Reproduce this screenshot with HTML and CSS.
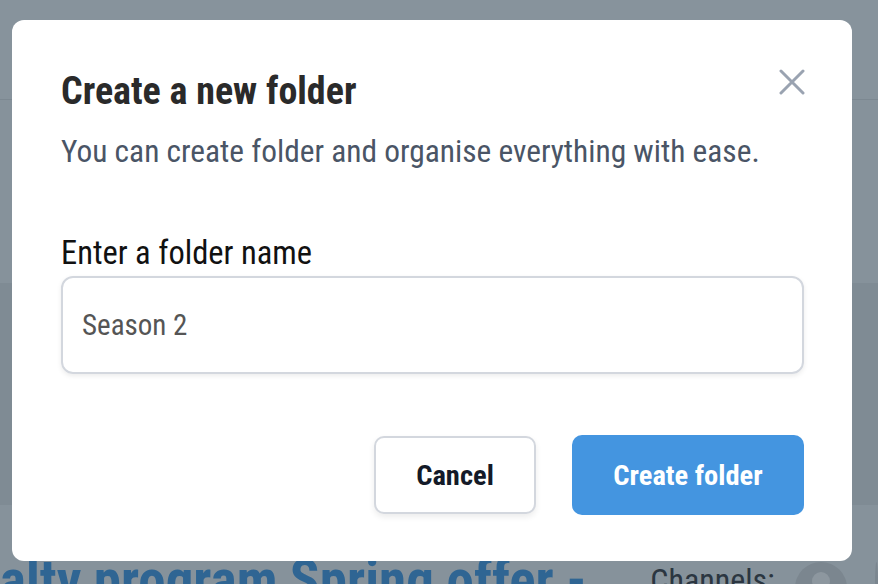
FILE: index.html
```html
<!DOCTYPE html>
<html lang="en">
<head>
<meta charset="utf-8">
<title>Create a new folder</title>
<link rel="stylesheet" href="styles.css">
</head>
<body>
<div class="page">
  <header class="page-header"></header>
  <section class="band band-light"></section>
  <section class="band band-dark"></section>
  <section class="band band-bottom">
    <div class="campaign-row">
      <span class="campaign-title">alty program Spring offer -</span>
      <span class="channels">Channels:</span>
      <span class="avatar">
        <svg viewBox="0 0 52 52" width="52" height="52"><circle cx="26" cy="26" r="26" fill="#7b868f"/><circle cx="26" cy="19" r="9" fill="#8d979f"/></svg>
      </span>
      <span class="avatar avatar-2"></span>
    </div>
  </section>
</div>

<div class="backdrop">
  <div class="modal" role="dialog" aria-labelledby="modal-title">
    <div class="modal-head">
      <h1 id="modal-title" class="modal-title">Create a new folder</h1>
      <button class="close-btn" aria-label="Close">
        <svg viewBox="0 0 26 26" width="26" height="26"><path d="M2 2 L24 24 M24 2 L2 24" stroke="#9aa3b1" stroke-width="3" stroke-linecap="round" fill="none"/></svg>
      </button>
    </div>
    <p class="modal-sub">You can create folder and organise everything with ease.</p>
    <label class="field-label" for="folder-name">Enter a folder name</label>
    <div class="field">
      <span class="field-value" id="folder-name">Season 2</span>
    </div>
    <div class="actions">
      <button class="btn btn-secondary">Cancel</button>
      <button class="btn btn-primary">Create folder</button>
    </div>
  </div>
</div>
</body>
</html>
```
FILE: styles.css
```css
html, body {
  margin: 0;
  padding: 0;
}
body {
  width: 878px;
  height: 584px;
  overflow: hidden;
  position: relative;
  background: #87939c;
  font-family: "Roboto Condensed", Roboto, "Liberation Sans", sans-serif;
}

/* background page (already dimmed by overlay) */
.page {
  display: flex;
  flex-direction: column;
  height: 584px;
}
.page-header {
  height: 99px;
  border-bottom: 1px solid #7c8891;
  background: #87939c;
}
.band-light {
  height: 183px;
  background: #86929b;
}
.band-dark {
  height: 222px;
  background: #7f8b94;
}
.band-bottom {
  flex: 1;
  background: #86929b;
  overflow: hidden;
}
.campaign-row {
  display: flex;
  align-items: flex-start;
  padding-top: 44px;
  white-space: nowrap;
}
.campaign-title {
  font-size: 55px;
  font-weight: 700;
  color: #2f6593;
  line-height: 62px;
  margin-right: 64px;
}
.channels {
  font-size: 32px;
  color: #2b3641;
  line-height: 62px;
  padding-top: 0;
  margin-right: 20px;
}
.avatar {
  display: block;
  width: 52px;
  height: 52px;
  margin-top: 13px;
}
.avatar svg { display: block; }
.avatar-2 {
  margin-left: 28px;
  border-radius: 50%;
  background: #7b868f;
}

/* modal */
.backdrop {
  position: absolute;
  inset: 0;
  padding: 20px 26px 0 12px;
}
.modal {
  box-sizing: border-box;
  width: 840px;
  height: 541px;
  background: #ffffff;
  border-radius: 12px;
  padding: 49px 48px 46px 49px;
  display: flex;
  flex-direction: column;
}
.modal-head {
  display: flex;
  justify-content: space-between;
  align-items: flex-start;
}
.modal-title {
  margin: 0;
  font-size: 38px;
  line-height: 44px;
  font-weight: 700;
  color: #2a2a2a;
}
.close-btn {
  border: 0;
  background: none;
  padding: 0;
  margin: 0 -1px 0 0;
  width: 26px;
  height: 26px;
  cursor: pointer;
}
.close-btn svg { display: block; }
.modal-sub {
  margin: 20px 0 0;
  font-size: 31.4px;
  line-height: 38px;
  color: #4a5566;
}
.field-label {
  display: block;
  margin-top: 63px;
  font-size: 32.5px;
  line-height: 38px;
  font-weight: 400;
  color: #111111;
}
.field {
  margin-top: 4px;
  box-sizing: border-box;
  height: 98px;
  border: 2px solid #d3d7de;
  border-radius: 12px;
  box-shadow: 0 2px 5px rgba(0, 0, 0, 0.08);
  display: flex;
  align-items: center;
  padding-left: 19px;
}
.field-value {
  font-size: 29px;
  color: #555555;
}
.actions {
  margin-top: auto;
  display: flex;
  justify-content: flex-end;
  align-items: center;
  gap: 36px;
}
.btn {
  font-family: inherit;
  font-size: 28.5px;
  font-weight: 700;
  border-radius: 10px;
  cursor: pointer;
  box-sizing: border-box;
}
.btn-secondary {
  width: 162px;
  height: 78px;
  background: #ffffff;
  color: #141a28;
  border: 2px solid #d3d7de;
  box-shadow: 0 3px 6px rgba(0, 0, 0, 0.08);
}
.btn-primary {
  width: 232px;
  height: 80px;
  background: #4495e0;
  color: #ffffff;
  border: 0;
}
```
